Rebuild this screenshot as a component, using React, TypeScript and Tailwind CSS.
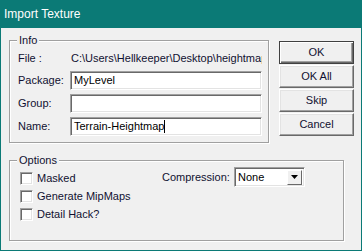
import { useState } from 'react'

const font = { fontFamily: '"Liberation Sans", Arial, sans-serif' }

function Sunken({ value, caret }: { value: string; caret?: boolean }) {
  return (
    <div className="h-[19px] w-[192px] bg-white border border-t-[#a0a0a0] border-l-[#a0a0a0] border-b-white border-r-white shadow-[inset_1px_1px_0_#696969,inset_-1px_-1px_0_#e3e3e3] flex items-center pl-[3px] text-[11px] text-black leading-none">
      <span>{value}</span>
      {caret && <span className="w-px h-[13px] bg-black" />}
    </div>
  )
}

function Button({ label, isDefault }: { label: string; isDefault?: boolean }) {
  return (
    <button
      className={
        'w-[75px] h-[23px] bg-[#f0f0f0] text-[11px] text-[#101030] leading-none ' +
        (isDefault
          ? 'border border-[#404040] shadow-[inset_1px_1px_0_white,inset_-1px_-1px_0_#696969,inset_-2px_-2px_0_#a0a0a0]'
          : 'border border-t-white border-l-white border-b-[#696969] border-r-[#696969] shadow-[inset_-1px_-1px_0_#a0a0a0,inset_1px_1px_0_#e3e3e3]')
      }
    >
      {label}
    </button>
  )
}

function Check({ label }: { label: string }) {
  const [on, setOn] = useState(false)
  return (
    <div className="h-[18px] flex items-center gap-[4px]" onClick={() => setOn(!on)}>
      <div className="w-[13px] h-[13px] bg-white border border-t-[#a0a0a0] border-l-[#a0a0a0] border-b-white border-r-white shadow-[inset_1px_1px_0_#696969,inset_-1px_-1px_0_#e3e3e3] flex items-center justify-center text-[10px]">
        {on ? '✓' : ''}
      </div>
      <span className="text-[11px] text-[#101030]">{label}</span>
    </div>
  )
}

export default function App() {
  return (
    <div style={font} className="w-[362px] h-[251px] bg-[#f0f0f0] border-x border-b border-[#0b7a76] flex flex-col select-none">
      <div className="h-[28px] bg-[#0b7a76] flex items-center pl-[4px] -mx-px">
        <span className="text-white text-[12px]">Import Texture</span>
      </div>

      <div className="flex flex-col pl-[8px] pt-[5px]">
        <div className="flex items-start">
          <fieldset className="w-[260px] h-[110px] border border-[#a0a0a0] shadow-[inset_1px_1px_0_white,1px_1px_0_white] px-0 m-0">
            <legend className="ml-[7px] px-[2px] h-[14px] leading-[14px] text-[11px] text-[#101030] bg-[#f0f0f0]">Info</legend>
            <div className="flex flex-col pl-[8px] pr-[5px] text-[11px] text-[#101030]">
              <div className="h-[22px] flex items-center">
                <span className="w-[52px]">File :</span>
                <span className="whitespace-nowrap overflow-hidden w-[192px] pl-[1px]">C:\Users\Hellkeeper\Desktop\heightmap</span>
              </div>
              <div className="flex items-center mt-[2px]">
                <span className="w-[52px]">Package:</span>
                <Sunken value="MyLevel" />
              </div>
              <div className="flex items-center mt-[4px]">
                <span className="w-[52px]">Group:</span>
                <Sunken value="" />
              </div>
              <div className="flex items-center mt-[4px]">
                <span className="w-[52px]">Name:</span>
                <Sunken value="Terrain-Heightmap" caret />
              </div>
            </div>
          </fieldset>

          <div className="flex flex-col gap-px ml-[10px] mt-[8px]">
            <Button label="OK" isDefault />
            <Button label="OK All" />
            <Button label="Skip" />
            <Button label="Cancel" />
          </div>
        </div>

        <fieldset className="w-[335px] h-[88px] mt-[10px] border border-[#a0a0a0] shadow-[inset_1px_1px_0_white,1px_1px_0_white] px-0 m-0">
          <legend className="ml-[7px] px-[2px] h-[14px] leading-[14px] text-[11px] text-[#101030] bg-[#f0f0f0]">Options</legend>
          <div className="flex items-start pl-[10px]">
            <div className="w-[142px] flex flex-col pt-[2px]">
              <Check label="Masked" />
              <Check label="Generate MipMaps" />
              <Check label="Detail Hack?" />
            </div>
            <div className="flex items-center">
              <span className="w-[72px] text-[11px] text-[#101030]">Compression:</span>
              <div className="w-[71px] h-[20px] bg-white border border-t-[#a0a0a0] border-l-[#a0a0a0] border-b-white border-r-white shadow-[inset_1px_1px_0_#696969,inset_-1px_-1px_0_#e3e3e3] flex items-center justify-between pl-[3px] pr-[2px]">
                <span className="text-[11px] text-black">None</span>
                <div className="w-[15px] h-[15px] bg-[#f0f0f0] border border-t-white border-l-white border-b-[#696969] border-r-[#696969] flex items-center justify-center">
                  <svg width="7" height="4" viewBox="0 0 7 4"><path d="M0 0h7L3.5 4z" fill="black" /></svg>
                </div>
              </div>
            </div>
          </div>
        </fieldset>
      </div>
    </div>
  )
}
